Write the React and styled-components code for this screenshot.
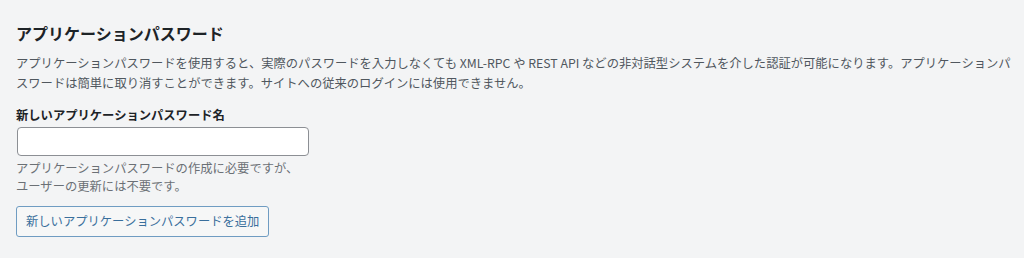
import React from "react";
import styled, { createGlobalStyle } from "styled-components";

const GlobalStyle = createGlobalStyle`
  html, body {
    margin: 0;
    padding: 0;
    background: #f3f4f5;
  }
  body {
    font-family: "Noto Sans CJK JP", "Noto Sans", sans-serif;
    color: #3c434a;
  }
`;

const Section = styled.section`
  display: flex;
  flex-direction: column;
  align-items: flex-start;
  padding: 22px 8px 0 16px;
  width: 1000px;
`;

const Title = styled.h2`
  margin: 0;
  font-size: 16px;
  line-height: 22px;
  font-weight: 700;
  color: #1d2327;
`;

const Description = styled.p`
  margin: 10px 0 0;
  font-size: 12.3px;
  line-height: 19.5px;
  color: #50575e;
`;

const Field = styled.div`
  display: flex;
  flex-direction: column;
  align-items: flex-start;
  margin-top: 13px;
`;

const Label = styled.label`
  font-size: 12.3px;
  line-height: 19px;
  font-weight: 700;
  color: #1d2327;
`;

const TextInput = styled.input`
  box-sizing: border-box;
  margin-top: 2px;
  margin-left: 1px;
  width: 292px;
  height: 29px;
  padding: 0 8px;
  border: 1px solid #8c8f94;
  border-radius: 4px;
  background: #fff;
  font-family: inherit;
  font-size: 13px;
  outline: none;
`;

const Help = styled.p`
  margin: 4px 0 0;
  font-size: 12.3px;
  line-height: 17.5px;
  color: #6b7075;
`;

const Button = styled.button`
  box-sizing: border-box;
  margin-top: 11px;
  height: 31px;
  padding: 0 9px;
  border: 1px solid #6f9cc2;
  border-radius: 3px;
  background: #f6f7f7;
  color: #3a6f9c;
  font-family: inherit;
  font-size: 12.3px;
  line-height: 29px;
  cursor: pointer;
`;

export default function App() {
  return (
    <>
      <GlobalStyle />
      <Section>
        <Title>アプリケーションパスワード</Title>
        <Description>
          アプリケーションパスワードを使用すると、実際のパスワードを入力しなくても XML-RPC や REST API などの非対話型システムを介した認証が可能になります。アプリケーションパスワードは簡単に取り消すことができます。サイトへの従来のログインには使用できません。
        </Description>
        <Field>
          <Label htmlFor="new_application_password_name">新しいアプリケーションパスワード名</Label>
          <TextInput id="new_application_password_name" type="text" />
          <Help>
            アプリケーションパスワードの作成に必要ですが、
            <br />
            ユーザーの更新には不要です。
          </Help>
        </Field>
        <Button type="button">新しいアプリケーションパスワードを追加</Button>
      </Section>
    </>
  );
}
